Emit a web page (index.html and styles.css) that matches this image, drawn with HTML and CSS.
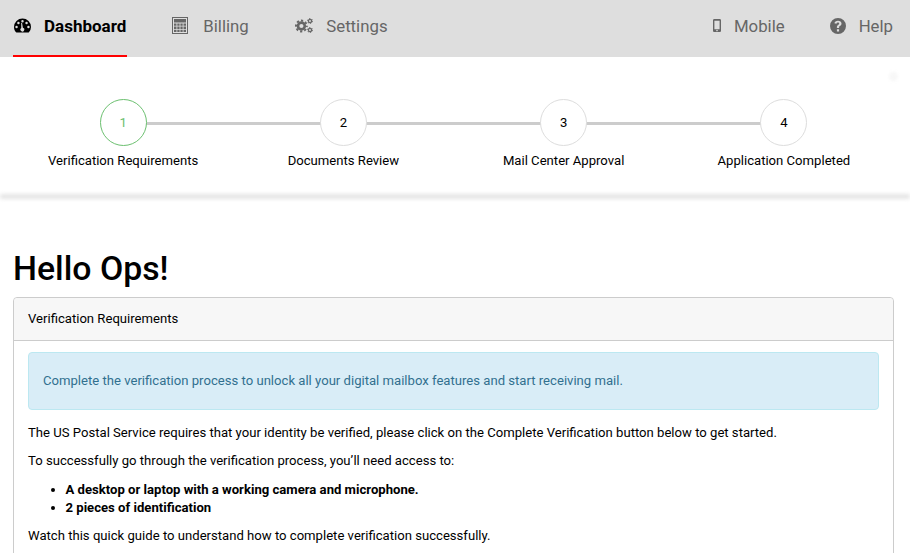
FILE: index.html
```html
<!DOCTYPE html>
<html lang="en">
<head>
<meta charset="utf-8">
<title>Dashboard</title>
<link rel="stylesheet" href="styles.css">
</head>
<body>
<nav class="nav">
  <a class="nav-item active"><svg class="ic ic-dash" viewBox="0 0 18 15"><path fill-rule="evenodd" d="M9 0a9 9 0 0 0-9 9c0 2.300.8 4.300 2.200 5.600.2.200.5.400.8.400h12c.3 0 .6-.2.8-.4A8.600 8.600 0 0 0 18 9a9 9 0 0 0-9-9zM9 1.800a1.300 1.300 0 1 1 0 2.600 1.300 1.300 0 0 1 0-2.600zM4.700 3.600a1.300 1.300 0 1 1 0 2.600 1.300 1.300 0 0 1 0-2.600zM13.300 3.600a1.300 1.300 0 1 1 0 2.600 1.300 1.300 0 0 1 0-2.600zM2.700 7.700a1.300 1.300 0 1 1 0 2.600 1.300 1.300 0 0 1 0-2.600zM15.300 7.700a1.300 1.300 0 1 1 0 2.600 1.300 1.300 0 0 1 0-2.600zM7.600 4.800l.9-.1.900 5.200a2 2 0 1 1-1.700.3z"/></svg><span>Dashboard</span></a>
  <a class="nav-item nav-bill"><svg class="ic ic-bill" viewBox="0 0 16 17"><path fill-rule="evenodd" d="M0 0h16v17H0zM1 1v15h14V1zM2 2h12v3.500H2zM2 6.500h2.500v2.300H2zM5.300 6.500h2.300v2.300H5.300zM8.400 6.500h2.300v2.300H8.400zM11.500 6.500H14v2.300h-2.500zM2 9.600h2.500v2.300H2zM5.300 9.600h2.300v2.300H5.300zM8.400 9.600h2.300v2.300H8.400zM11.500 9.600H14v2.300h-2.500zM2 12.700h2.500V15H2zM5.300 12.700h2.300V15H5.300zM8.400 12.700h2.300V15H8.400zM11.500 12.700H14V15h-2.500z"/></svg><span>Billing</span></a>
  <a class="nav-item nav-gear"><svg class="ic ic-gear" viewBox="0 0 18 15"><g fill="none" stroke="currentColor"><circle cx="6.400" cy="8" r="3.400" stroke-width="2.600"/><circle cx="6.400" cy="8" r="5.400" stroke-width="2" stroke-dasharray="2.200 2.040" stroke-dashoffset="1.100"/><circle cx="15" cy="3" r="1.600" stroke-width="1.300"/><circle cx="15" cy="12" r="1.600" stroke-width="1.300"/><circle cx="15" cy="3" r="2.500" stroke-width="1" stroke-dasharray="1.300 1.320"/><circle cx="15" cy="12" r="2.500" stroke-width="1" stroke-dasharray="1.300 1.320"/></g></svg><span>Settings</span></a>
  <a class="nav-item push"><svg class="ic ic-mob" viewBox="0 0 8 13"><path fill-rule="evenodd" d="M1.300 0h5.400C7.400 0 8 .6 8 1.300v10.400c0 .7-.6 1.300-1.300 1.300H1.300C.6 13 0 12.400 0 11.700V1.300C0 .6.600 0 1.300 0zM1.400 1.700v8.500h5.200V1.700zM4 10.800a.8.800 0 1 0 0 1.600.8.800 0 0 0 0-1.600z"/></svg><span>Mobile</span></a>
  <a class="nav-item"><svg class="ic ic-help" viewBox="0 0 16 16"><path fill-rule="evenodd" d="M8 0a8 8 0 1 1 0 16A8 8 0 0 1 8 0zM6.900 11.300v2.200h2.200v-2.200zM8 2.700c-2 0-3.300 1-3.600 2.600l2 .5c.2-.8.700-1.200 1.500-1.200.7 0 1.300.4 1.300 1 0 .5-.4.800-1.100 1.300-.8.500-1.200 1.100-1.200 2.100v1h2.200v-.7c0-.5.200-.7.900-1.200.9-.6 1.500-1.300 1.500-2.500 0-1.700-1.500-2.900-3.500-2.900z"/></svg><span>Help</span></a>
</nav>
<section class="steps">
  <i class="spot"></i>
  <ol class="step-list">
    <li class="step done"><span class="circle">1</span><span class="label">Verification Requirements</span></li>
    <li class="step"><span class="circle">2</span><span class="label">Documents Review</span></li>
    <li class="step"><span class="circle">3</span><span class="label">Mail Center Approval</span></li>
    <li class="step"><span class="circle">4</span><span class="label">Application Completed</span></li>
  </ol>
</section>
<main class="main">
  <h1 class="title">Hello Ops!</h1>
  <section class="card">
    <header class="card-head">Verification Requirements</header>
    <div class="card-body">
      <div class="alert">Complete the verification process to unlock all your digital mailbox features and start receiving mail.</div>
      <p>The US Postal Service requires that your identity be verified, please click on the Complete Verification button below to get started.</p>
      <p>To successfully go through the verification process, you’ll need access to:</p>
      <ul>
        <li>A desktop or laptop with a working camera and microphone.</li>
        <li>2 pieces of identification</li>
      </ul>
      <p>Watch this quick guide to understand how to complete verification successfully.</p>
    </div>
  </section>
</main>
</body>
</html>
```
FILE: styles.css
```css
* { box-sizing: border-box; }
html, body { margin: 0; height: 553px; overflow: hidden; }
body { font-family: Roboto, "Liberation Sans", sans-serif; font-size: 13.12px; line-height: 18px; color: #000; background: #fff; }
.nav { display: flex; height: 57px; background: #dedede; padding: 0 17px 0 13px; gap: 45px; }
.nav-item { display: flex; align-items: center; height: 57px; font-size: 16.8px; color: #666; gap: 13px; border-bottom: 2px solid transparent; padding-bottom: 4px; }
.nav-item.active { color: #000; font-size: 17px; font-weight: 700; border-bottom-color: #f00; padding: 0 1px 4px; }
.nav-item.push { margin-left: auto; }
.nav-bill { gap: 15px; }
.nav-gear { margin-left: 1.500px; }
.ic { display: block; fill: currentColor; flex: none; }
.ic-dash { width: 17px; height: 15px; }
.ic-bill { width: 16px; height: 17px; }
.ic-gear { width: 18px; height: 15px; }
.ic-mob { width: 8px; height: 13px; }
.ic-help { width: 16px; height: 16px; }
.steps { position: relative; height: 139px; padding: 42px 16px 0 13px; }
.steps::after { content: ""; position: absolute; left: 0; right: 0; bottom: -2px; height: 3px; background: #d4d4d4; filter: blur(2px); }
.spot { position: absolute; left: 889px; top: 15px; width: 9px; height: 9px; border-radius: 50%; background: #f7f7f7; filter: blur(1.500px); }
.step-list { display: grid; grid-template-columns: repeat(4, 1fr); list-style: none; margin: 0; padding: 0; }
.step { position: relative; display: flex; flex-direction: column; align-items: center; gap: 6px; }
.step:not(:last-child)::after { content: ""; position: absolute; left: 50%; width: 100%; top: 23px; height: 3px; background: #ccc; }
.circle { position: relative; z-index: 1; display: flex; align-items: center; justify-content: center; width: 47px; height: 47px; border: 1px solid #ddd; border-radius: 50%; background: #fff; }
.done .circle { border-color: #6cc070; color: #6cc070; }
.label { white-space: nowrap; }
.main { padding: 0 16px 0 13px; }
.title { margin: 49px 0 0; font-size: 33.8px; line-height: 48px; font-weight: 500; }
.card { margin-top: 4px; border: 1px solid #ccc; border-radius: 4px; }
.card-head { height: 43px; padding: 12px 14px; background: #f7f7f7; border-bottom: 1px solid #ccc; border-radius: 4px 4px 0 0; }
.card-body { padding: 11px 14px; }
.alert { height: 58px; padding: 19px 14px; margin-bottom: 14px; background: #d9edf7; border: 1px solid #bce8f1; border-radius: 4px; color: #31708f; }
.card-body p { margin: 0 0 10px; }
.card-body ul { margin: 11px 0 10px; padding-left: 37.500px; font-weight: 700; }
```
